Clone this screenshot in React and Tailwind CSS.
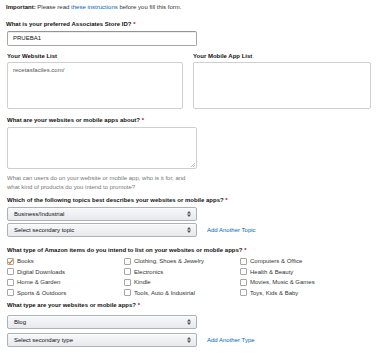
import React from 'react';

const font = { fontFamily: '"Liberation Sans", Arial, sans-serif' };

function Req() {
  return <span className="text-[#c40000]"> *</span>;
}

function Arrows() {
  return (
    <svg width="4" height="6" viewBox="0 0 4 6" className="absolute right-[5px] top-1/2 -translate-y-1/2">
      <path d="M0 2.4 L2 0 L4 2.4 Z" fill="#555" />
      <path d="M0 3.6 L2 6 L4 3.6 Z" fill="#555" />
    </svg>
  );
}

function Select({ label }) {
  return (
    <div className="relative w-[190px] h-[14px] rounded-[2px] border border-[#adb1b8] bg-gradient-to-b from-[#f7f8fa] to-[#e7e9ec] shadow-[0_1px_0_rgba(255,255,255,0.6)_inset]">
      <span className="absolute left-[6px] top-0 leading-[12px] text-[#111]">{label}</span>
      <Arrows />
    </div>
  );
}

function Check({ label, checked }) {
  return (
    <div className="flex items-center h-[10.5px]">
      <span className="relative w-[7px] h-[7px] rounded-[1px] border border-[#a6a6a6] bg-white mr-[3px] shrink-0">
        {checked && (
          <svg width="7" height="7" viewBox="0 0 7 7" className="absolute -left-[1px] -top-[1px]">
            <path d="M1.3 3.8 L2.8 5.3 L5.8 1.6" fill="none" stroke="#e47911" strokeWidth="1.2" />
          </svg>
        )}
      </span>
      <span className="text-[#333] leading-[10px]">{label}</span>
    </div>
  );
}

export default function App() {
  const items = [
    ['Books', true], ['Clothing, Shoes & Jewelry'], ['Computers & Office'],
    ['Digital Downloads'], ['Electronics'], ['Health & Beauty'],
    ['Home & Garden'], ['Kindle'], ['Movies, Music & Games'],
    ['Sports & Outdoors'], ['Tools, Auto & Industrial'], ['Toys, Kids & Baby'],
  ];

  return (
    <div style={font} className="w-[379px] h-[362px] bg-white text-[6px] text-[#333] pl-[7px] pt-[2px] overflow-hidden">
      <div className="h-[10px] leading-[10px] -ml-[1px]">
        <span className="font-bold text-[#111]">Important:</span> Please read{' '}
        <span className="text-[#0066c0]">these instructions</span> before you fill this form.
      </div>

      <div className="mt-[7px] h-[10px] leading-[10px] font-bold text-[#111] -ml-[1px]">
        What is your preferred Associates Store ID?<Req />
      </div>
      <div className="mt-[2px] w-[190px] h-[15px] rounded-[2px] border border-[#a6a6a6] border-t-[#949494] flex items-center px-[5px] text-[#111] shadow-[0_1px_0_rgba(0,0,0,0.07)_inset]">
        PRUEBA1
      </div>

      <div className="mt-[5px] flex gap-[10px]">
        <div className="w-[176px]">
          <div className="h-[10px] leading-[10px] font-bold text-[#111]">Your Website List</div>
          <div className="mt-[1px] h-[47px] rounded-[2px] border border-[#cfcfcf] px-[5px] pt-[3px] leading-[8px] text-[#555]">
            recetasfaciles.com/
          </div>
        </div>
        <div className="w-[178px]">
          <div className="h-[10px] leading-[10px] font-bold text-[#111]">Your Mobile App List</div>
          <div className="mt-[1px] h-[47px] rounded-[2px] border border-[#cfcfcf]" />
        </div>
      </div>

      <div className="mt-[6px] h-[10px] leading-[10px] font-bold text-[#111]">
        What are your websites or mobile apps about?<Req />
      </div>
      <div className="relative mt-[2px] w-[190px] h-[42px] rounded-[2px] border border-[#cfcfcf]">
        <svg width="5" height="5" viewBox="0 0 5 5" className="absolute right-[1px] bottom-[1px]">
          <path d="M5 1 L1 5 M5 3 L3 5" stroke="#999" strokeWidth="0.6" />
        </svg>
      </div>
      <div className="mt-[5px] leading-[9px] text-[#767676] w-[200px]">
        What can users do on your website or mobile app, who is it for, and<br />
        what kind of products do you intend to promote?
      </div>

      <div className="mt-[3px] h-[10px] leading-[10px] font-bold text-[#111]">
        Which of the following topics best describes your websites or mobile apps?<Req />
      </div>
      <div className="mt-[2px] flex flex-col gap-[2px]">
        <Select label="Business/Industrial" />
        <div className="flex items-center">
          <Select label="Select secondary topic" />
          <span className="ml-[10px] text-[#0066c0]">Add Another Topic</span>
        </div>
      </div>

      <div className="mt-[8px] h-[10px] leading-[10px] font-bold text-[#111]">
        What type of Amazon items do you intend to list on your websites or mobile apps?<Req />
      </div>
      <div className="mt-[1px] grid grid-cols-[117px_116px_120px]">
        {items.map(([l, c]) => (
          <Check key={l} label={l} checked={c} />
        ))}
      </div>

      <div className="mt-[2px] h-[10px] leading-[10px] font-bold text-[#111]">
        What type are your websites or mobile apps?<Req />
      </div>
      <div className="mt-[5px] flex flex-col gap-[4px]">
        <Select label="Blog" />
        <div className="flex items-center">
          <Select label="Select secondary type" />
          <span className="ml-[10px] text-[#0066c0]">Add Another Type</span>
        </div>
      </div>
    </div>
  );
}
